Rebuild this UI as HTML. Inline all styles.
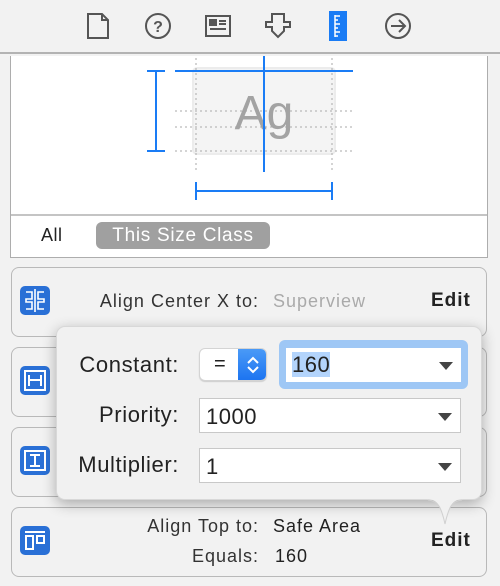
<!DOCTYPE html>
<html><head><meta charset="utf-8"><style>
*{margin:0;padding:0;box-sizing:border-box}
body{width:500px;height:586px;background:#f2f2f2;position:relative;overflow:hidden;font-family:"Liberation Sans",sans-serif;color:#222}
.a{position:absolute}
.box{position:absolute;left:11px;width:476px;height:70px;border:1.5px solid #b9b9b9;border-radius:8px;background:#f2f2f2}
.t{position:absolute;font-size:18px;letter-spacing:1px;white-space:nowrap}
.p{position:absolute;font-size:22px;letter-spacing:0.6px;white-space:nowrap}
.field{position:absolute;left:199px;width:262px;height:35px;background:#fff;border:1px solid #c8c8c8;font-size:22px;padding:5px 6px;letter-spacing:0.5px}
.tri{position:absolute;right:8px;top:14px;width:0;height:0;border-left:7px solid transparent;border-right:7px solid transparent;border-top:8px solid #444}
</style></head><body>
<div class="a" style="left:0;top:0;width:500px;height:54px;background:#f2f2f2;border-bottom:2px solid #b3b3b3"></div>
<svg class="a" style="left:0;top:0" width="500" height="54" fill="none" stroke="#555" stroke-width="2">
<path d="M88 14H102L108 20V38H88Z M102 14V20H108"/>
<circle cx="158" cy="26" r="12"/>
<text x="158" y="32" font-size="16" font-family="Liberation Sans" fill="#555" stroke="none" text-anchor="middle" font-weight="bold">?</text>
<rect x="206" y="16" width="24" height="20"/><rect x="210" y="20" width="6" height="5" fill="#555"/><path d="M219 21H226M219 24H226M210 29H226"/>
<path d="M272 14H284V22H290V27H284V31L278 37L272 31V27H266V22H272Z"/>
<circle cx="398" cy="26" r="12"/><path d="M391 26H405M399 20L405 26L399 32"/>
<rect x="329" y="11" width="18" height="30" fill="#1a7cf5" stroke="none"/>
<path d="M335 15V37M335 16H340M335 20H338M335 24H340M335 28H338M335 32H340M335 36H338" stroke="#fff" stroke-width="1.5"/>
</svg>
<div class="a" style="left:10px;top:56px;width:478px;height:202px;background:#fff;border:1.5px solid #adadad;border-top:none"></div>
<div class="a" style="left:11px;top:214px;width:476px;height:1.5px;background:#c4c4c4"></div>
<svg class="a" style="left:0;top:54" width="500" height="160">
<rect x="193" y="14" width="142" height="86" rx="4" fill="#f4f4f4" stroke="#ececec" stroke-width="2"/>
<g stroke="#aaa" stroke-dasharray="2 3" stroke-width="1">
<path d="M175 57H353M175 73H353M175 97H353M196 4V118M332 4V118"/></g>
<text x="264" y="75" font-size="48" fill="#a3a3a3" text-anchor="middle" font-family="Liberation Sans">Ag</text>
<g stroke="#1a7cf5" stroke-width="2" fill="none">
<path d="M264 2V118M175 17H353M156 17V97M147 17H165M147 97H165M196 137H332M196 128V146M332 128V146"/></g>
</svg>
<div class="t" style="left:41px;top:225px;letter-spacing:0.5px">All</div>
<div class="a" style="left:96px;top:222px;width:174px;height:27px;border-radius:6px;background:#a0a0a0;color:#fff;font-size:19px;letter-spacing:0.7px;text-align:center;line-height:27px">This Size Class</div>

<div class="box" style="top:267px"></div>
<div class="box" style="top:347px"></div>
<div class="box" style="top:427px"></div>
<div class="box" style="top:507px"></div>
<svg class="a" style="left:0;top:0" width="60" height="586" fill="none" stroke="#fff" stroke-width="2">
<rect x="20" y="286" width="30" height="29" rx="5" fill="#2a70d6" stroke="none"/>
<path d="M35 289V312M26 292H32V299H26V302H32V309H26M44 292H38V299H44V302H38V309H44" stroke-width="1.6"/>
<rect x="20" y="366" width="30" height="29" rx="5" fill="#2a70d6" stroke="none"/>
<rect x="25" y="371" width="20" height="19"/><path d="M29 375V386M41 375V386M29 380H41"/>
<rect x="20" y="446" width="30" height="29" rx="5" fill="#2a70d6" stroke="none"/>
<rect x="25" y="451" width="20" height="19"/><path d="M30 455H40M30 466H40M35 455V466"/>
<rect x="20" y="526" width="30" height="29" rx="5" fill="#2a70d6" stroke="none"/>
<path d="M25 532H45"/><rect x="26" y="536" width="7" height="13"/><rect x="37" y="536" width="7" height="7"/>
</svg>
<div class="t" style="right:241px;top:291px;color:#333">Align Center X to:</div>
<div class="t" style="left:273px;top:291px;color:#aaa">Superview</div>
<div class="t" style="left:431px;top:290px;font-weight:bold;font-size:19px">Edit</div>
<div class="t" style="right:241px;top:516px;color:#333">Align Top to:</div>
<div class="t" style="left:273px;top:516px">Safe Area</div>
<div class="t" style="right:241px;top:546px;color:#333">Equals:</div>
<div class="t" style="left:275px;top:546px">160</div>
<div class="t" style="left:431px;top:530px;font-weight:bold;font-size:19px">Edit</div>

<div class="a" style="left:56px;top:326px;width:426px;height:174px;background:#f1f1f1;border-radius:9px;box-shadow:0 4px 14px rgba(0,0,0,.3);border:1px solid #d8d8d8"></div>
<svg class="a" style="left:420px;top:496px" width="50" height="32"><path d="M5 3C18 3 20 8 25 28C30 8 32 3 45 3Z" fill="#f1f1f1"/><path d="M8 4C18 5 21 10 25 28C29 10 32 5 42 4" fill="none" stroke="#d0d0d0"/></svg>
<div class="p" style="right:321px;top:352px">Constant:</div>
<div class="p" style="right:321px;top:402px">Priority:</div>
<div class="p" style="right:321px;top:452px">Multiplier:</div>
<div class="a" style="left:199px;top:348px;width:68px;height:33px;border-radius:6px;background:#fff;border:1px solid #d4d4d4;box-shadow:0 1px 1px rgba(0,0,0,.15);overflow:hidden">
<div class="a" style="left:14px;top:4px;font-size:20px">=</div>
<div class="a" style="left:38px;top:0;width:30px;height:33px;background:linear-gradient(#4a9af7,#1a72f0)"></div>
<svg class="a" style="left:44px;top:6px" width="18" height="20" fill="none" stroke="#fff" stroke-width="2"><path d="M4 8L9 3L14 8M4 12L9 17L14 12"/></svg>
</div>
<div class="a" style="left:279px;top:340px;width:189px;height:49px;border-radius:6px;background:#9ec7f5"></div>
<div class="field" style="left:286px;top:348px;width:175px;height:34px;border:none;padding:4px 6px"><span style="background:#b3d4fc">160</span><div class="tri"></div></div>
<div class="field" style="top:398px">1000<div class="tri"></div></div>
<div class="field" style="top:448px">1<div class="tri"></div></div>
</body></html>
